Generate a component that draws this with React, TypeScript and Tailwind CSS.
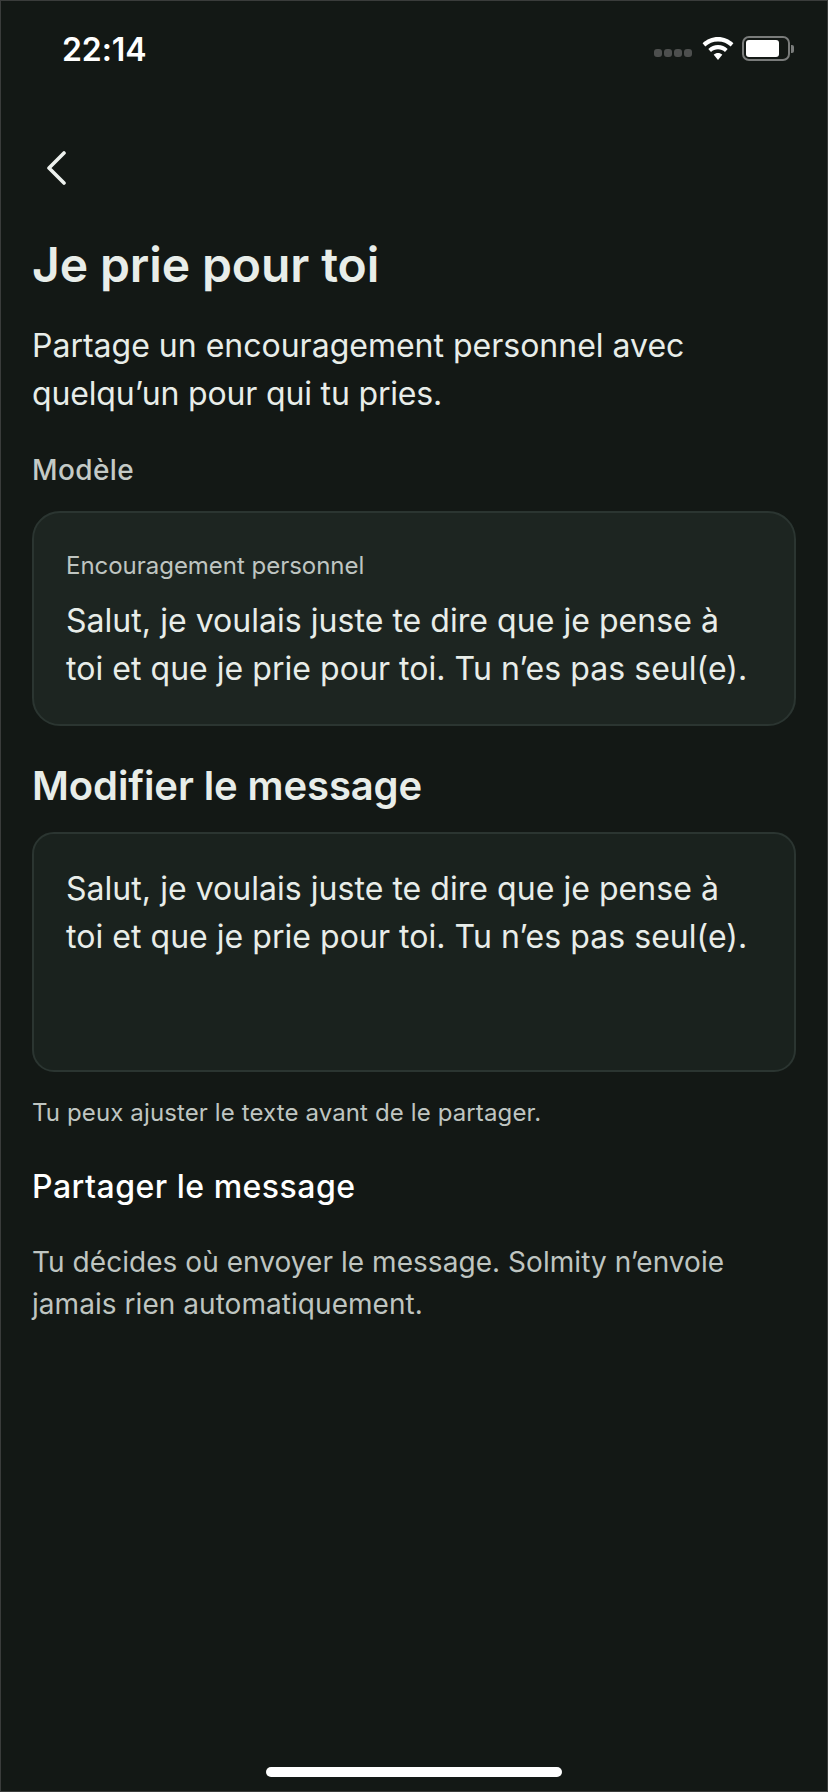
function StatusBar() {
  return (
    <div className="flex h-[100px] items-start justify-between pl-[61px] pr-[33px] pt-[29px]">
      <span className="text-[32px] font-semibold leading-[40px] tracking-[-0.1px] text-white">22:14</span>
      <div className="flex items-center gap-[8px] pt-[6px]">
        <div className="mr-[2px] mt-[8px] flex gap-[2px]">
          <span className="size-[8px] rounded-[3px] bg-[#4d4f4e]" />
          <span className="size-[8px] rounded-[3px] bg-[#4d4f4e]" />
          <span className="size-[8px] rounded-[3px] bg-[#4d4f4e]" />
          <span className="size-[8px] rounded-[3px] bg-[#4d4f4e]" />
        </div>
        <svg width="32" height="24" viewBox="0 0 32 24" fill="#ffffff">
          <path d="M16 0C10 0 4.7 2.4 0.6 6.2L3.3 9.4C6.6 6.3 11 4.4 16 4.4S25.4 6.3 28.7 9.4L31.4 6.2C27.3 2.4 22 0 16 0Z" />
          <path d="M16 8C12.3 8 9 9.5 6.3 11.9L9 15C10.9 13.3 13.3 12.3 16 12.3S21.1 13.3 23 15L25.7 11.9C23 9.5 19.7 8 16 8Z" />
          <path d="M16 16C14.4 16 12.9 16.6 11.7 17.7L16 23L20.3 17.7C19.1 16.6 17.6 16 16 16Z" />
        </svg>
        <div className="flex items-center gap-[1px]">
          <div className="flex h-[25px] w-[48px] items-center rounded-[7px] border-[2px] border-[#7a7c7b] p-[2px]">
            <div className="h-full w-[33px] rounded-[3px] bg-white" />
          </div>
          <div className="h-[8px] w-[3px] rounded-r-[2px] bg-[#7a7c7b]" />
        </div>
      </div>
    </div>
  );
}

const message = (
  <>
    Salut, je voulais juste te dire que je pense à
    <br />
    toi et que je prie pour toi. Tu n’es pas seul(e).
  </>
);

export default function App() {
  return (
    <div
      className="flex h-[1792px] w-[828px] flex-col overflow-hidden border border-[#3a3c3b] bg-[#131815] text-[#e8ede9]"
      style={{ fontFamily: "Inter, sans-serif" }}
    >
      <StatusBar />

      <main className="flex flex-1 flex-col px-[31px]">
        <div className="mt-[50px] h-[34px] pl-[15px]">
          <svg width="20" height="34" viewBox="0 0 20 34" fill="none" stroke="#edf1ee" strokeWidth="3.6" strokeLinecap="round" strokeLinejoin="round">
            <path d="M17 2L2 17L17 32" />
          </svg>
        </div>

        <h1 className="mt-[52px] text-[48px] font-semibold leading-[56px] tracking-[-0.1px]">Je prie pour toi</h1>

        <p className="mt-[29px] text-[32px] leading-[48px]">
          Partage un encouragement personnel avec
          <br />
          <span className="tracking-[-0.17px]">quelqu’un pour qui tu pries.</span>
        </p>

        <h2 className="mt-[34px] text-[28px] font-[450] leading-[36px] tracking-[0.4px] text-[#c4cac6]">Modèle</h2>

        <section className="mt-[23px] h-[215px] rounded-[28px] border-[2px] border-[#2b3531] bg-[#1d2521] px-[32px] pt-[38px]">
          <p className="text-[24px] leading-[30px] tracking-[-0.03px] text-[#bfc5c1]">Encouragement personnel</p>
          <p className="mt-[16px] text-[32px] leading-[48px] tracking-[0.04px]">{message}</p>
        </section>

        <h2 className="mt-[36px] text-[40px] font-semibold leading-[48px] tracking-[-0.1px]">Modifier le message</h2>

        <section className="mt-[22px] h-[240px] rounded-[22px] border-[2px] border-[#2b3531] bg-[#1a221e] px-[32px] pt-[31px]">
          <p className="text-[32px] leading-[48px] tracking-[0.04px]">{message}</p>
        </section>

        <p className="mt-[26px] text-[24px] leading-[30px] tracking-[0.12px] text-[#bfc5c1]">
          Tu peux ajuster le texte avant de le partager.
        </p>

        <h3 className="mt-[38px] text-[32px] font-medium leading-[42px] tracking-[0.5px] text-white">Partager le message</h3>

        <p className="mt-[33px] text-[28px] leading-[42px] tracking-[0.05px] text-[#bfc5c1]">
          Tu décides où envoyer le message. Solmity n’envoie
          <br />
          jamais rien automatiquement.
        </p>
      </main>

      <div className="mb-[14px] flex justify-center">
        <div className="h-[10px] w-[296px] rounded-full bg-white" />
      </div>
    </div>
  );
}
